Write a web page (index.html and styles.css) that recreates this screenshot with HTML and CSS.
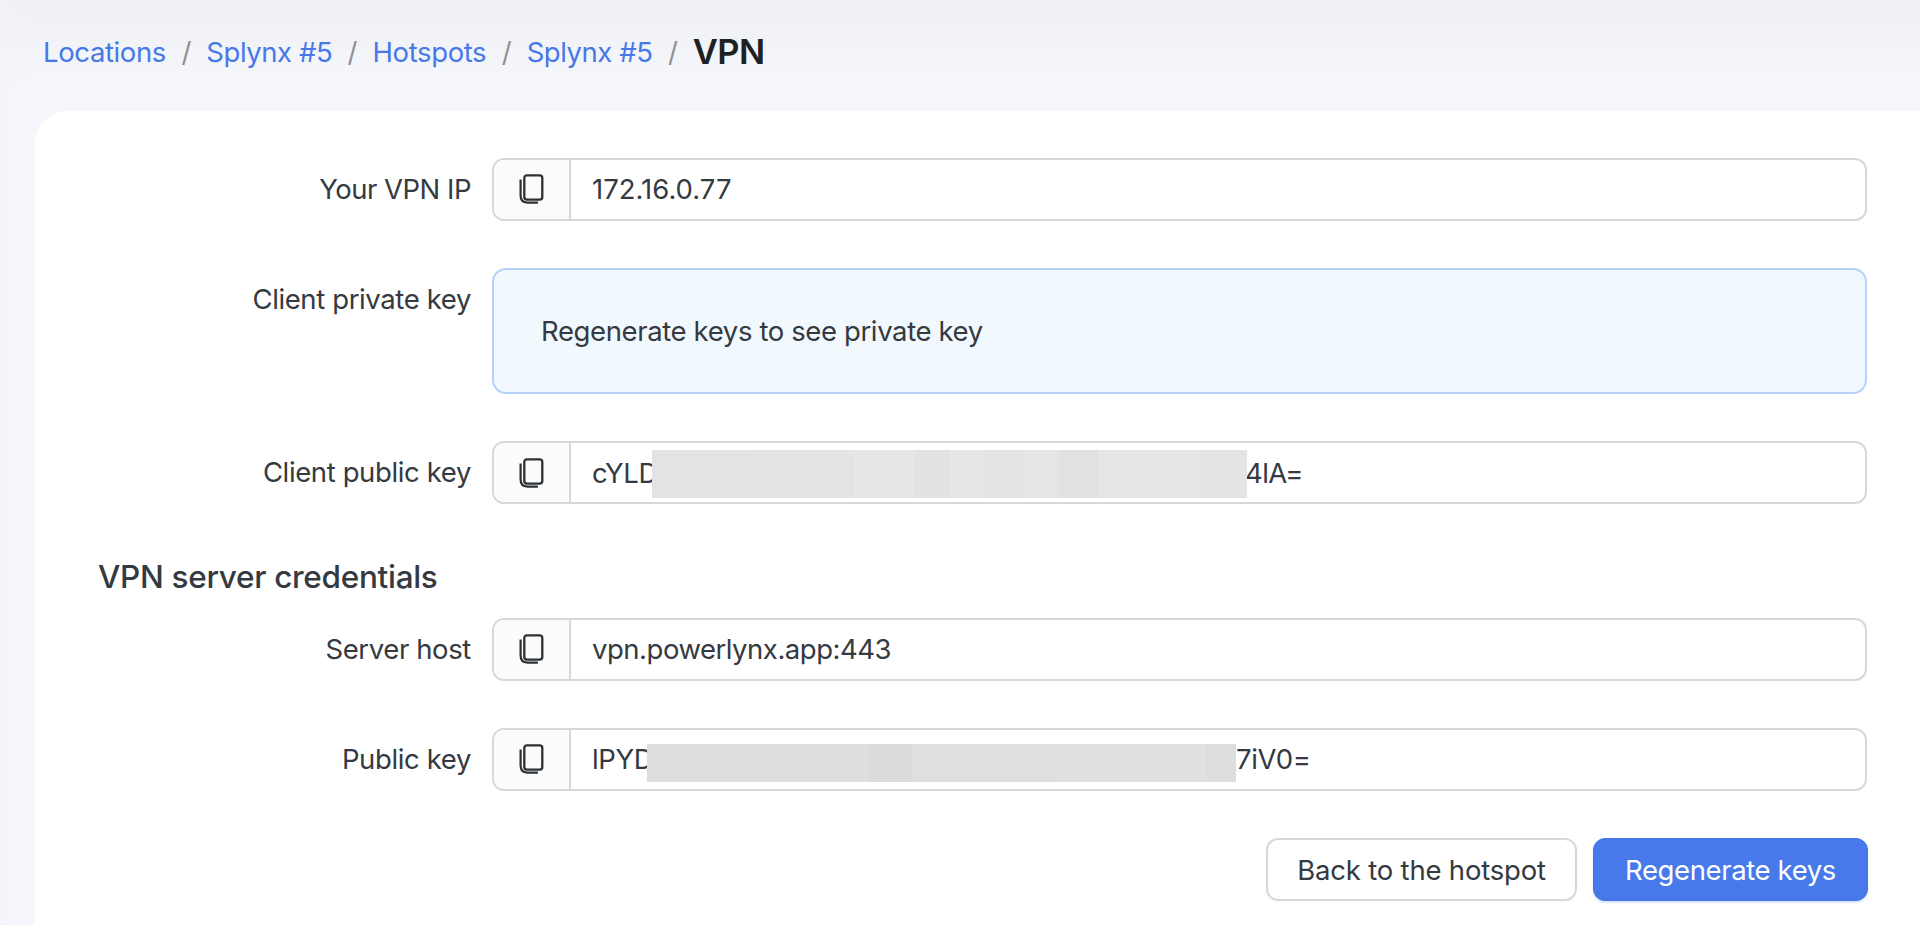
FILE: index.html
```html
<!DOCTYPE html>
<html lang="en">
<head>
<meta charset="utf-8">
<title>VPN</title>
<link rel="stylesheet" href="styles.css">
</head>
<body>
<svg class="sprite" aria-hidden="true">
  <symbol id="copy" viewBox="0 0 28 32">
    <rect x="6.300" y="2.300" width="18" height="24.300" rx="2.600" fill="none" stroke="currentColor" stroke-width="2.300"/>
    <path d="M2.600 6.400v16.200c0 4.600 2.300 7 6.800 7h10.500" fill="none" stroke="currentColor" stroke-width="2.200"/>
  </symbol>
</svg>
<nav class="breadcrumb">
  <a>Locations</a><span class="sep">/</span>
  <a class="site">Splynx #5</a><span class="sep">/</span>
  <a>Hotspots</a><span class="sep">/</span>
  <a class="site">Splynx #5</a><span class="sep">/</span>
  <h1>VPN</h1>
</nav>
<main class="panel">
  <div class="row">
    <label class="label-ip">Your VPN IP</label>
    <div class="field"><button class="copy"><svg><use href="#copy"/></svg></button><div class="value ip">172.16.0.77</div></div>
  </div>
  <div class="row">
    <label>Client private key</label>
    <div class="alert">Regenerate keys to see private key</div>
  </div>
  <div class="row">
    <label>Client public key</label>
    <div class="field"><button class="copy"><svg><use href="#copy"/></svg></button><div class="value"><span class="head-client">cYLD</span><span class="mask mask-client"></span><span class="tail-client">4lA=</span></div></div>
  </div>
  <h2>VPN server credentials</h2>
  <div class="row">
    <label>Server host</label>
    <div class="field"><button class="copy"><svg><use href="#copy"/></svg></button><div class="value host">vpn.powerlynx.app:443</div></div>
  </div>
  <div class="row">
    <label>Public key</label>
    <div class="field"><button class="copy"><svg><use href="#copy"/></svg></button><div class="value"><span class="head-server">lPYD</span><span class="mask mask-server"></span><span class="tail-server">7iV0=</span></div></div>
  </div>
  <div class="actions">
    <button class="btn btn-back">Back to the hotspot</button>
    <button class="btn btn-primary">Regenerate keys</button>
  </div>
</main>
</body>
</html>
```
FILE: styles.css
```css
* { box-sizing: border-box; }
body {
  margin: 0;
  height: 925px;
  overflow: hidden;
  display: flex;
  flex-direction: column;
  background: linear-gradient(to right, rgba(242, 244, 249, .5), rgba(246, 247, 252, 0) 36px), linear-gradient(#eff0f4, #f1f2f6 28px, #f6f7fc 86px);
  color: #343a3f;
  font: 400 27.5px/34px Inter, sans-serif;
  letter-spacing: -.38px;
}
.sprite { display: none; }
.breadcrumb {
  flex: none;
  height: 111px;
  padding: 0 0 7px 43px;
  display: flex;
  align-items: center;
  white-space: nowrap;
}
.breadcrumb a { color: #4678ea; }
.breadcrumb .site { letter-spacing: -.45px; }
.sep { width: 40.4px; text-align: center; color: #8e9194; }
.breadcrumb h1 { margin: 0; font-size: 34.5px; font-weight: 600; letter-spacing: -.6px; color: #1d2124; }
.panel {
  flex: 1;
  margin-left: 35px;
  padding: 47px 53px 0 64px;
  background: #fff;
  border-radius: 32px 0 0 0;
}
.row {
  display: grid;
  grid-template-columns: 372px 1fr;
  column-gap: 21px;
  margin-bottom: 47.4px;
}
label { text-align: right; padding-top: 14px; white-space: nowrap; }
.label-ip { letter-spacing: -.5px; }
.field {
  display: flex;
  height: 62.7px;
  border: 2px solid #d8d8d8;
  border-radius: 12px;
  background: #fff;
}
.copy {
  width: 77px;
  padding: 0;
  border: 0;
  border-right: 2px solid #d8d8d8;
  border-radius: 10px 0 0 10px;
  background: #fbfbfb;
  color: #2b3135;
  display: flex;
  align-items: center;
  justify-content: center;
}
.copy svg { width: 28px; height: 32px; }
.value { flex: 1; display: flex; align-items: center; padding-left: 21px; white-space: nowrap; }
.value.ip { letter-spacing: 0; }
.value.host { letter-spacing: -.48px; }
.head-client { width: 60px; }
.head-server { width: 55px; }
.mask { flex: none; position: relative; z-index: 1; }
.mask-client {
  width: 595px;
  height: 48px;
  margin-top: 3px;
  background: linear-gradient(to right, #e3e3e3 0 100px, #e3e5e4 100px 202px, #e6e8e7 202px 263px, #e2e2e2 263px 298px, #e7e7e7 298px 332px, #e4e4e4 332px 368px, #e4e6e5 368px 407px, #e1e1e1 407px 446px, #e4e6e5 446px 550px, #e3e5e4 550px);
}
.mask-server {
  width: 589px;
  height: 38px;
  margin-top: 8px;
  background: linear-gradient(to right, #dedede 0 46px, #dddfde 46px 222px, #dadcdb 222px 264px, #dde0de 264px 416px, #e0e0e0 416px 559px, #dcdedd 559px);
}
.tail-client { margin-left: -2px; letter-spacing: -.6px; }
.alert {
  height: 125.7px;
  padding: 44px 47px;
  border: 2px solid #b5d2fa;
  border-radius: 14px;
  background: #f1f8fe;
}
h2 { margin: 55.5px 0 22.7px -1px; font-size: 31.5px; line-height: 36px; font-weight: 500; letter-spacing: -.3px; }
.actions { display: flex; justify-content: flex-end; gap: 16px; margin-right: -1px; }
.btn {
  height: 63px;
  padding: 0;
  border-radius: 12px;
  font: inherit;
  letter-spacing: -.2px;
  white-space: nowrap;
}
.btn-back { width: 311px; background: #fff; border: 2px solid #d8d8d8; color: inherit; box-shadow: 0 2px 2px rgba(0, 0, 0, .02); }
.btn-primary { width: 275px; background: #4779ea; border: 1px solid #4174e6; color: #fff; letter-spacing: -.38px; box-shadow: 0 2px 2px rgba(71, 121, 234, .2); }
```
